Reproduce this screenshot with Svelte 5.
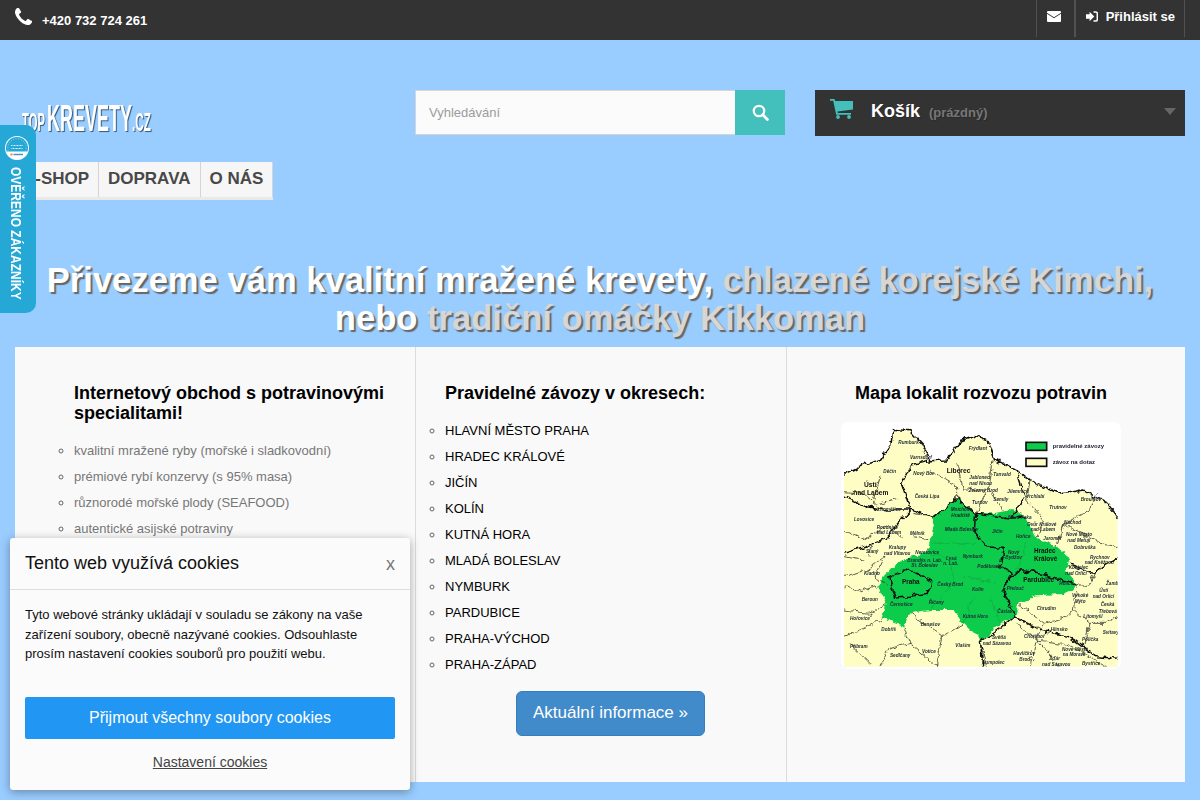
<script>
  const col1 = ['kvalitní mražené ryby (mořské i sladkovodní)','prémiové rybí konzervy (s 95% masa)','různorodé mořské plody (SEAFOOD)','autentické asijské potraviny'];
  const col2 = ['HLAVNÍ MĚSTO PRAHA','HRADEC KRÁLOVÉ','JIČÍN','KOLÍN','KUTNÁ HORA','MLADÁ BOLESLAV','NYMBURK','PARDUBICE','PRAHA-VÝCHOD','PRAHA-ZÁPAD'];
  const small = [
    ['Rumburk',205,103],['Varnsdorf',240,146],['Frýdlant',416,121],['Děčín',160,190],['Nový Bor',250,195],
    ['Jablonec',418,208],['nad Nisou',418,226],['Železný Brod',416,246],['Tanvald',490,197],['Jilemnice',532,249],
    ['Vrchlabí',588,264],['Česká Lípa',254,264],['Litoměřice',142,303],['Lovosice',72,332],['Turnov',426,282],
    ['Semily',490,272],['Broumov',752,274],['Trutnov',658,298],['Náchod',702,343],['Roudnice',140,356],['nad Labem',140,373],
    ['Mělník',240,374],['Mnichovo',362,302],['Hradiště',364,320],['Mladá Boleslav',344,363],['Nová Paka',534,328],
    ['Jičín',486,368],['Hořice',558,385],['Dvůr Králové',592,347],['nad Labem',602,364],['Jaroměř',640,390],
    ['Nové Město',708,379],['nad Metují',712,396],['Dobruška',732,418],['Slaný',108,430],['Kralupy',176,416],
    ['nad Vltavou',162,436],['Neratovice',256,431],['Nymburk',398,445],['Poděbrady',442,475],['Lysá',348,449],['n. Lab.',340,466],
    ['Nový',534,431],['Bydžov',526,448],['Rychnov',780,446],['nad Kněžnou',764,463],['Kostelec',716,478],['nad Orlicí',706,496],
    ['Brandýs n. Lab.',232,456],['St. Boleslav',244,470],['Kladno',102,494],['Český Brod',322,527],['Kolín',426,543],
    ['Přelouč',530,539],['Holice',688,526],['Vysoké',726,562],['Mýto',734,580],['Ústí',808,545],['nad Orlicí',788,563],
    ['Česká',812,587],['Třebová',806,608],['Žamb.',828,525],['Beroun',95,573],['Černošice',180,587],['Říčany',296,581],
    ['Chrudim',620,601],['Litomyšl',760,625],['Hořovice',60,629],['Kutná Hora',398,624],['Čáslav',502,610],
    ['Benešov',272,648],['Hlinsko',662,664],['Svitavy',818,671],['Polička',756,694],['Dobříš',154,664],['Příbram',60,713],
    ['Sedlčany',180,741],['Votice',276,729],['Vlašim',376,711],['Světlá',486,686],['nad Sázavou',458,706],['Chotěboř',582,683],
    ['Havlíčkův',550,735],['Brod',568,752],['Nové Město',696,722],['na Moravě',698,739],['Žďár',658,751],['nad Sázavou',636,768],
    ['Humpolec',456,762],['Bystřice',756,765]
  ];
  const big = [['Liberec',350,188],['Ústí',102,232],['nad Labem',70,256]];
  const mid = [['Praha',216,522],['Hradec',612,429],['Králové',612,454],['Pardubice',580,517]];
</script>

<div class="page">
  <header class="topbar">
    <div class="phone">
      <svg class="ico-phone" viewBox="0 0 1408 1408" aria-hidden="true"><path d="M1408 1112q0 27-10 70.5t-21 68.500q-21 50-122 106-94 51-186 51-27 0-53-3.500t-57.500-12.500-47-14.500-55.500-20.500-49-18q-98-35-175-83-127-79-264-216t-216-264q-48-77-83-175-3-9-18-49t-20.500-55.500-14.500-47-12.500-57.500-3.500-53q0-92 51-186 56-101 106-122 25-11 68.500-21t70.500-10q14 0 21 3 18 6 53 76 11 19 30 54t35 63.500 31 53.500q3 4 17.500 25t21.500 35.500 7 28.500q0 20-28.500 50t-62 55-62 53-28.500 46q0 9 5 22.500t8.500 20.500 14 24 11.500 19q76 137 174 235t235 174q2 1 19 11.500t24 14 20.500 8.500 22.500 5q18 0 46-28.500t53-62 55-62 50-28.500q14 0 28.500 7t35.500 21.500 25 17.500q25 15 53.500 31t63.500 35 54 30q70 35 76 53 3 7 3 21z"/></svg>
      <span>+420 732 724 261</span>
    </div>
    <nav class="toplinks">
      <a class="tl mail" href="#m" aria-label="E-mail">
        <svg viewBox="0 0 14 11" width="14" height="11" aria-hidden="true"><path d="M1 0h12a1 1 0 0 1 1 1v.8L7 6.300 0 1.800V1a1 1 0 0 1 1-1zM0 2.700l7 4.500 7-4.500V10a1 1 0 0 1-1 1H1a1 1 0 0 1-1-1z"/></svg>
      </a>
      <a class="tl login" href="#l">
        <svg viewBox="0 0 12 11" width="12" height="11" aria-hidden="true"><path d="M0 3.300h3.600V.8l4.700 4.700-4.700 4.700V7.700H0z"/><path d="M7.500.9h2.200a1.600 1.600 0 0 1 1.600 1.600v6a1.600 1.600 0 0 1-1.600 1.600H7.500" fill="none" stroke="#fff" stroke-width="1.500"/></svg>
        <span>Přihlásit se</span>
      </a>
    </nav>
  </header>

  <section class="masthead">
    <div class="brand-row">
      <a class="logo" href="#h"><span class="l1">TOP</span><span class="l2">KREVETY</span><span class="l3">.CZ</span></a>
      <form class="search" onsubmit={(e) => e.preventDefault()}>
        <input type="text" placeholder="Vyhledávání" />
        <button type="submit" aria-label="Hledat">
          <svg viewBox="0 0 17 17" width="17" height="17" aria-hidden="true"><circle cx="7" cy="7" r="5.200" fill="none" stroke="#fff" stroke-width="2.300"/><path d="M10.800 10.800l4.600 4.600" stroke="#fff" stroke-width="2.800" stroke-linecap="round"/></svg>
        </button>
      </form>
      <div class="cart">
        <svg class="ico-cart" viewBox="0 0 24 20" width="24" height="20" aria-hidden="true"><path d="M0 0h4.500l.6 2H23v8.500L7.500 12.500l.3 1.500H21v1.800H6.200L3.200 1.800H0z"/><circle cx="8" cy="18" r="1.900"/><circle cx="19" cy="18" r="1.900"/></svg>
        <b>Košík</b>
        <span class="empty">(prázdný)</span>
        <i class="caret"></i>
      </div>
    </div>
    <nav class="menu">
      <a href="#e" class="first">E-SHOP</a>
      <a href="#d">DOPRAVA</a>
      <a href="#o">O NÁS</a>
    </nav>
    <h1>Přivezeme vám kvalitní mražené krevety, <span>chlazené korejské Kimchi,</span><br />nebo <span>tradiční omáčky Kikkoman</span></h1>
  </section>

  <section class="cols">
    <div class="col c1">
      <h2>Internetový obchod s potravinovými specialitami!</h2>
      <ul class="grey">{#each col1 as t}<li>{t}</li>{/each}</ul>
    </div>
    <div class="col c2">
      <h2>Pravidelné závozy v okresech:</h2>
      <ul>{#each col2 as t}<li>{t}</li>{/each}</ul>
      <a class="info" href="#i">Aktuální informace »</a>
    </div>
    <div class="col c3">
      <h2>Mapa lokalit rozvozu potravin</h2>
      <svg class="map" viewBox="33 36 840 740" role="img" aria-label="Mapa lokalit rozvozu">
        <defs>
          <filter id="rough" x="-5%" y="-5%" width="110%" height="110%">
            <feTurbulence type="fractalNoise" baseFrequency="0.045" numOctaves="3" seed="4" result="n"/>
            <feDisplacementMap in="SourceGraphic" in2="n" scale="22" xChannelSelector="R" yChannelSelector="G"/>
            <feGaussianBlur stdDeviation="0.9"/>
          </filter>
          <filter id="soft"><feGaussianBlur stdDeviation="0.7"/></filter>
          <clipPath id="mapclip"><rect x="42" y="48" width="821" height="722"/></clipPath>
        </defs>
        <rect x="33" y="36" width="840" height="740" rx="22" fill="#fff"/>
        <g clip-path="url(#mapclip)">
          <g filter="url(#rough)">
            <path class="land" d="M30 200L100 165 150 150 182 105 188 58 240 62 280 105 300 152 350 150 392 92 430 78 472 92 490 145 560 182 600 212 690 252 760 240 832 280 875 335V790H30z"/>
            <path class="green" d="M140 525L190 470 235 440 288 430 305 385 310 322 380 265 440 310 490 310 545 300 590 322 620 385 680 410 722 445 708 482 742 528 700 552 620 556 565 580 555 620 500 650 452 692 400 640 370 600 300 600 240 610 222 650 155 625 170 580z"/>
            <g class="thin">
              <path d="M42 245L100 250 140 285 210 265M42 360L100 390 170 345 215 380M42 500L105 480 165 440M165 440L135 500 170 525M42 530L95 545 140 525M42 600L120 610 170 580M42 680L120 645 155 625M222 650L240 700 180 715 150 770M240 610L335 680 400 640M335 680L320 770M240 700L320 770M450 692L470 770M600 212L590 270 640 330 620 385M680 410L700 345 780 300 800 250M700 345L760 370 810 400 863 410M742 528L780 520 800 480M742 528L730 600 710 620 640 640 620 690 690 770M565 580L640 640M730 600L780 640 830 640 863 620M780 640L760 730 700 700 620 690M560 640L620 690 600 770M300 180L380 230 380 265M490 145L480 220 440 310M130 285L150 200M310 322L250 310M380 160L400 240 480 240 520 300M250 380L300 390M120 440L130 400M42 440L100 450M60 700L120 760M760 730L830 770"/>
              <path class="on-green" d="M310 400L440 400M360 440L370 520 300 600M400 500L500 520M430 560L400 640M480 560L510 640M590 400L560 480M288 430L360 440"/>
            </g>
            <g class="thick">
              <path d="M30 200L100 165 150 150 182 105 188 58 240 62 280 105 300 152 350 150 392 92 430 78 472 92 490 145 560 182 600 212 690 252 760 240 832 280 875 335"/>
              <path d="M42 430L100 410 170 385 240 300 310 322 380 265 440 310 545 325 590 320M42 260L110 290 170 300 240 300M245 165L215 220 240 300M245 165L300 152M560 182L585 260 545 325M440 310L435 370 470 410 520 415 510 470 550 490 515 530 555 620 500 665 452 692 458 770M570 482L515 530M570 482L640 490 742 528M555 620L630 660 720 680 800 740 863 745M722 462L790 490 863 440M180 500L235 475 302 512 295 550 200 565 185 530z"/>
            </g>
          </g>
          <g filter="url(#soft)">
            <rect x="588" y="97" width="62" height="24" fill="#0dcb4c" stroke="#111" stroke-width="5"/>
            <rect x="588" y="145" width="62" height="24" fill="#fdfdc4" stroke="#111" stroke-width="5"/>
            <text class="legend" x="668" y="113">pravidelné závozy</text>
            <text class="legend" x="668" y="161">závoz na dotaz</text>
            {#each small as [t, x, y]}<text class="sm" {x} {y}>{t}</text>{/each}
            {#each big as [t, x, y]}<text class="bg" {x} {y}>{t}</text>{/each}
            {#each mid as [t, x, y]}<text class="md" {x} {y}>{t}</text>{/each}
          </g>
        </g>
      </svg>
    </div>
  </section>

  <aside class="badge">
    <svg class="seal" viewBox="0 0 24 24" width="24" height="24" aria-hidden="true">
      <circle cx="12" cy="12" r="12" fill="#fff"/>
      <circle cx="12" cy="12" r="11" fill="#25a8d6"/>
      <circle cx="12" cy="12" r="9.200" fill="none" stroke="#d5f0f8" stroke-width=".6" stroke-dasharray="1 1.600"/>
      <path d="M1.400 15.500h21.200A11.500 11.500 0 0 1 12 23.500 11.500 11.500 0 0 1 1.400 15.500z" fill="#fff"/>
      <path d="M6 9.500h12M6.500 12.500h11" stroke="#e8f7fb" stroke-width="1.100" stroke-dasharray="1 .5"/>
      <rect x="5.500" y="17.500" width="2" height="2" fill="#f28a1e"/>
      <rect x="8.500" y="17.800" width="9.500" height="1.400" fill="#3f95b8"/>
    </svg>
    <span class="vert">OVĚŘENO ZÁKAZNÍKY</span>
  </aside>

  <div class="cookie">
    <div class="ck-head"><span>Tento web využívá cookies</span><span class="x">x</span></div>
    <div class="ck-body">
      <p>Tyto webové stránky ukládají v souladu se zákony na vaše zařízení soubory, obecně nazývané cookies. Odsouhlaste prosím nastavení cookies souborů pro použití webu.</p>
      <button class="accept">Přijmout všechny soubory cookies</button>
      <a class="settings" href="#s">Nastavení cookies</a>
    </div>
  </div>
</div>

<style>
  :global(body) { margin: 0; background: #99ccff; font-family: "Liberation Sans", Arial, sans-serif; overflow: hidden; }
  .page { position: relative; height: 800px; overflow: hidden; background: #99ccff; }
  a { text-decoration: none; color: inherit; }

  .topbar { height: 40px; background: #333; color: #fff; display: flex; justify-content: space-between; padding: 0 15px; }
  .phone { display: flex; align-items: flex-start; font-size: 13px; font-weight: 700; }
  .phone span { margin: 13px 0 0 10px; line-height: 15px; }
  .ico-phone { width: 17px; height: 17px; fill: #fff; margin-top: 8px; }
  .toplinks { display: flex; height: 37px; }
  .tl { display: flex; align-items: center; border-left: 1px solid #515151; color: #fff; font-size: 13px; font-weight: 700; fill: #fff; }
  .mail { width: 38px; box-sizing: border-box; padding: 0 0 5px 10px; }
  .login { border-left-width: 2px; border-right: 1px solid #515151; padding: 0 9px 4px 10px; gap: 8px; }

  .masthead { height: 307px; }
  .brand-row { display: flex; padding: 50px 15px 0 22px; align-items: flex-start; }
  .logo { width: 393px; height: 71px; flex: none; color: #fff; display: flex; align-items: baseline; font-family: "Liberation Sans", sans-serif; font-weight: 700; text-shadow: 2px 1px 1px #35597a; line-height: 1; padding-top: 10px; box-sizing: border-box; white-space: nowrap; }
  .logo span { display: inline-block; transform-origin: left bottom; }
  .l1 { font-size: 25px; width: 25px; transform: scaleX(.45); }
  .l2 { font-size: 37px; width: 85px; transform: scaleX(.486); }
  .l3 { font-size: 25px; width: 20px; transform: scaleX(.47); }

  .search { display: flex; width: 370px; height: 45px; }
  .search input { width: 320px; box-sizing: border-box; border: 1px solid #d6d4d4; border-right: 0; background: #fbfbfb; padding: 0 13px; font: 13px "Liberation Sans", sans-serif; color: #666; outline: 0; }
  .search input::placeholder { color: #9c9b9b; opacity: 1; }
  .search button { width: 50px; border: 0; background: #43bfbc; display: flex; align-items: center; justify-content: center; padding: 0; }
  .cart { position: relative; margin-left: 30px; width: 370px; height: 46px; background: #333; color: #fff; display: flex; align-items: flex-start; box-sizing: border-box; }
  .ico-cart { fill: #43bfbc; margin: 9px 0 0 15px; }
  .cart b { font-size: 18px; margin: 11px 0 0 17px; line-height: 21px; text-shadow: 1px 1px rgba(0,0,0,.2); }
  .empty { font-size: 13px; font-weight: 700; color: #777; margin: 15px 0 0 9px; line-height: 16px; text-shadow: 1px 1px rgba(0,0,0,.2); }
  .caret { position: absolute; right: 9px; top: 18px; border: 6px solid transparent; border-top: 7px solid #666; border-bottom: 0; }

  .menu { display: flex; margin: 1px 0 0 15px; width: max-content; height: 35px; background: #f6f6f6; border-bottom: 3px solid #e9e9e9; box-sizing: content-box; }
  .menu a { display: block; padding: 0 9px; border-right: 1px solid #d6d4d4; font-size: 17px; font-weight: 700; color: #484848; line-height: 34px; white-space: nowrap; }
  .menu .first { width: 84px; box-sizing: border-box; text-align: right; }

  h1 { margin: 61px 0 0; text-align: center; font-size: 34.600px; line-height: 38px; font-weight: 700; color: #fff; text-shadow: 2px 2px 1px #666; }
  h1 span { color: #d6d6d6; }

  .cols { display: grid; grid-template-columns: 400px 370px 398px; gap: 1px; margin: 0 15px; height: 435px; background: #dcdcdc; width: 1170px; }
  .col { background: #f9f9f9; min-width: 0; }
  h2 { margin: 0; color: #000; font-size: 18px; line-height: 20px; font-weight: 700; }
  ul { list-style: circle; margin: 0; padding: 0; font-size: 13px; color: #000; }
  li { line-height: 26px; }
  li::marker { color: #666; }
  .c1 { padding: 36px 20px 0 59px; }
  .c1 ul { margin-top: 15px; }
  .grey { color: #777; }
  .c2 { padding: 36px 0 0 29px; display: flex; flex-direction: column; }
  .c2 ul { margin-top: 15px; }
  .info { align-self: flex-start; margin: 13px 0 0 71px; width: 189px; height: 45px; box-sizing: border-box; text-align: center; background: #428bca; border: 1px solid #357ebd; border-radius: 6px; color: #fff; font-size: 17px; line-height: 41px; }
  .c3 { display: flex; flex-direction: column; align-items: center; padding: 36px 10px 0 0; }
  .map { display: block; width: 280px; height: 246.700px; margin-top: 19px; }
  .land { fill: #fdfdc4; }
  .green { fill: #0dcb4c; }
  .thin path { fill: none; stroke: #222; stroke-width: 2.200; }
  .thin .on-green { stroke: #0a9a3a; stroke-width: 1.500; }
  .thick path { fill: none; stroke: #111; stroke-width: 4.500; stroke-linejoin: round; }
  .sm { font: italic 700 14px "Liberation Sans", sans-serif; fill: #1f2833; }
  .bg { font: 700 20px "Liberation Sans", sans-serif; fill: #111; }
  .md { font: 700 19px "Liberation Sans", sans-serif; fill: #111; }
  .legend { font: 700 18px "Liberation Sans", sans-serif; fill: #223; }

  .badge { position: absolute; left: 0; top: 125px; width: 36px; height: 188px; background: #25a8d6; border-radius: 0 10px 10px 0; display: flex; flex-direction: column; align-items: center; box-sizing: border-box; padding-top: 11px; }
  .seal { flex: none; margin-right: 2px; }
  .vert { writing-mode: vertical-rl; color: #fff; font-size: 15px; font-weight: 700; margin: 7px 4px 0 0; white-space: nowrap; line-height: 14px; transform: scaleY(.8); transform-origin: top; }

  .cookie { position: absolute; left: 10px; top: 538px; width: 400px; height: 252px; background: #fbfbfb; border-radius: 3px; box-shadow: 0 2px 10px rgba(0,0,0,.35); box-sizing: border-box; }
  .ck-head { height: 51px; border-bottom: 1px solid #dedede; display: flex; justify-content: space-between; align-items: center; padding: 0 15px; font-size: 18px; color: #111; }
  .x { color: #777; padding-top: 2px; }
  .ck-body { padding: 15px 15px 0; }
  .ck-body p { margin: 0; font-size: 13px; line-height: 19.500px; color: #111; height: 92px; }
  .accept { display: block; width: 100%; height: 42px; border: 0; border-radius: 2px; background: #2196f3; color: #fff; font: 16px "Liberation Sans", sans-serif; padding: 0; }
  .settings { display: block; width: max-content; margin: 14px auto 0; font-size: 14px; color: #444; text-decoration: underline; line-height: 18px; }
</style>
